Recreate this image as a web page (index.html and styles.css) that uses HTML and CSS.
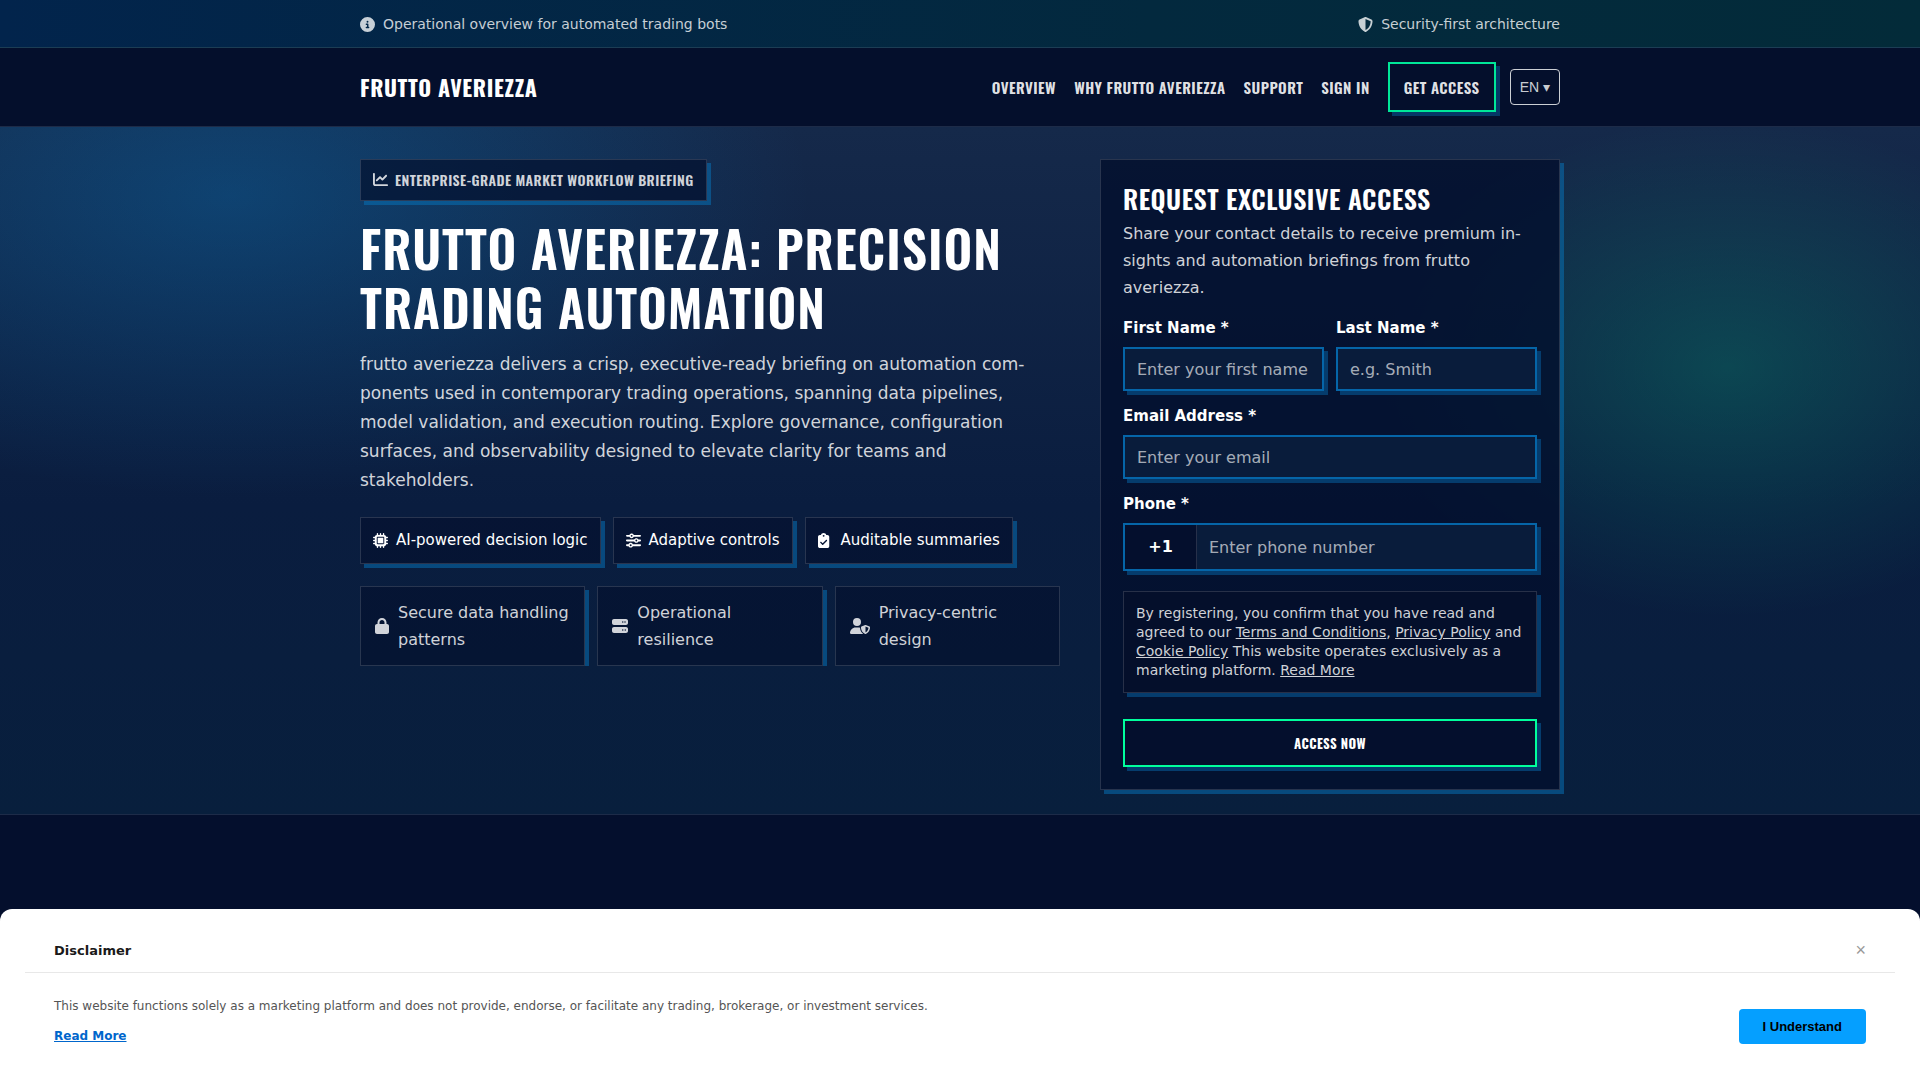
FILE: index.html
```html
<!DOCTYPE html>
<html lang="en">
<head>
  <meta charset="UTF-8" />
  <meta name="viewport" content="width=device-width, initial-scale=1.0" />
  <title>Frutto Averiezza</title>
  <link rel="stylesheet" href="styles.css">
</head>
<body>
  <div class="topbar">
    <div class="container topbar-inner">
      <span class="topbar-item">
        <svg class="icon" viewBox="0 0 512 512" aria-hidden="true"><path d="M256 512A256 256 0 1 0 256 0a256 256 0 1 0 0 512zM216 336h24V272H216c-13.300 0-24-10.700-24-24s10.700-24 24-24h48c13.300 0 24 10.700 24 24v88h8c13.300 0 24 10.700 24 24s-10.700 24-24 24H216c-13.300 0-24-10.700-24-24s10.700-24 24-24zm40-208a32 32 0 1 1 0 64 32 32 0 1 1 0-64z"/></svg>
        Operational overview for automated trading bots
      </span>
      <span class="topbar-item">
        <svg class="icon" viewBox="0 0 512 512" aria-hidden="true"><path d="M256 0c4.600 0 9.200 1 13.400 2.900L457.700 82.800c22 9.300 38.400 31 38.300 57.200c-.5 99.200-41.300 280.700-213.600 363.200c-16.700 8-36.100 8-52.800 0C57.300 420.700 16.500 239.200 16 140c-.1-26.200 16.300-47.900 38.300-57.200L242.700 2.900C246.800 1 251.400 0 256 0zm0 66.800V444.800C394 378 431.100 230.100 432 141.400L256 66.800z"/></svg>
        Security-first architecture
      </span>
    </div>
  </div>

  <header class="header">
    <div class="container header-inner">
      <a href="#" class="logo">Frutto Averiezza</a>
      <nav class="nav">
        <a href="#overview">Overview</a>
        <a href="#why">Why frutto averiezza</a>
        <a href="#support">Support</a>
        <a href="#signin">Sign in</a>
        <a href="#access" class="nav-cta">Get access</a>
        <button type="button" class="lang">EN ▾</button>
      </nav>
    </div>
  </header>

  <section class="hero">
    <div class="container hero-grid">
      <div class="hero-copy">
        <span class="kicker">
          <svg class="icon" viewBox="0 0 512 512" aria-hidden="true"><path d="M64 64c0-17.700-14.300-32-32-32S0 46.300 0 64V400c0 44.200 35.800 80 80 80H480c17.700 0 32-14.300 32-32s-14.300-32-32-32H80c-8.800 0-16-7.200-16-16V64zm406.600 86.600c12.500-12.500 12.500-32.800 0-45.300s-32.800-12.500-45.300 0L320 210.700l-57.400-57.400c-12.500-12.500-32.800-12.500-45.300 0l-112 112c-12.500 12.500-12.500 32.800 0 45.300s32.800 12.500 45.300 0L240 221.300l57.400 57.400c12.500 12.500 32.800 12.500 45.300 0l128-128z"/></svg>
          Enterprise-grade market workflow briefing
        </span>
        <h1>Frutto averiezza: precision trading automation</h1>
        <p class="lead">frutto averiezza delivers a crisp, executive-ready briefing on automation com&shy;ponents used in contemporary trading operations, spanning data pipelines, model validation, and execution routing. Explore governance, configuration surfaces, and observability designed to elevate clarity for teams and stakeholders.</p>

        <ul class="chips">
          <li class="chip">
            <svg class="icon" viewBox="0 0 512 512" aria-hidden="true"><path d="M176 24c0-13.300-10.700-24-24-24s-24 10.700-24 24v40c-35.300 0-64 28.700-64 64H24c-13.300 0-24 10.700-24 24s10.700 24 24 24h40v56H24c-13.300 0-24 10.700-24 24s10.700 24 24 24h40v56H24c-13.300 0-24 10.700-24 24s10.700 24 24 24h40c0 35.300 28.700 64 64 64v40c0 13.300 10.700 24 24 24s24-10.700 24-24v-40h56v40c0 13.300 10.700 24 24 24s24-10.700 24-24v-40h56v40c0 13.300 10.700 24 24 24s24-10.700 24-24v-40c35.300 0 64-28.700 64-64h40c13.300 0 24-10.700 24-24s-10.700-24-24-24h-40v-56h40c13.300 0 24-10.700 24-24s-10.700-24-24-24h-40v-56h40c13.300 0 24-10.700 24-24s-10.700-24-24-24h-40c0-35.300-28.700-64-64-64V24c0-13.300-10.700-24-24-24s-24 10.700-24 24v40h-56V24c0-13.300-10.700-24-24-24s-24 10.700-24 24v40h-56V24zM160 128h192c17.700 0 32 14.300 32 32v192c0 17.700-14.300 32-32 32H160c-17.700 0-32-14.300-32-32V160c0-17.700 14.300-32 32-32zm192 32H160v192h192V160z"/></svg>
            AI-powered decision logic
          </li>
          <li class="chip">
            <svg class="icon" viewBox="0 0 512 512" aria-hidden="true"><path d="M0 416c0 17.700 14.300 32 32 32h54.700c12.300 28.300 40.500 48 73.300 48s61-19.700 73.300-48H480c17.700 0 32-14.300 32-32s-14.300-32-32-32H233.300c-12.300-28.300-40.500-48-73.300-48s-61 19.700-73.300 48H32c-17.700 0-32 14.300-32 32zm128 0a32 32 0 1 1 64 0 32 32 0 1 1-64 0zm192-160a32 32 0 1 1 64 0 32 32 0 1 1-64 0zm32-80c-32.800 0-61 19.700-73.300 48H32c-17.700 0-32 14.300-32 32s14.300 32 32 32h246.700c12.300 28.300 40.500 48 73.300 48s61-19.700 73.300-48H480c17.700 0 32-14.300 32-32s-14.300-32-32-32h-54.700c-12.300-28.300-40.500-48-73.300-48zM192 128a32 32 0 1 1 0-64 32 32 0 1 1 0 64zm73.300-64C253 35.700 224.800 16 192 16s-61 19.700-73.300 48H32C14.300 64 0 78.300 0 96s14.300 32 32 32h86.700c12.300 28.300 40.500 48 73.300 48s61-19.700 73.300-48H480c17.700 0 32-14.300 32-32s-14.300-32-32-32H265.300z"/></svg>
            Adaptive controls
          </li>
          <li class="chip">
            <svg class="icon" viewBox="64 0 512 512" aria-hidden="true"><path d="M256 0c-41.800 0-77.400 26.700-90.500 64H128c-35.300 0-64 28.700-64 64v320c0 35.300 28.700 64 64 64h256c35.300 0 64-28.700 64-64V128c0-35.300-28.700-64-64-64h-37.500C333.400 26.700 297.800 0 256 0zm0 64a32 32 0 1 1 0 64 32 32 0 1 1 0-64zm113 209L241 401c-9.400 9.400-24.600 9.400-33.900 0l-64-64c-9.400-9.400-9.400-24.600 0-33.900s24.600-9.400 33.900 0l47 47 111-111c9.400-9.400 24.600-9.400 33.900 0s9.400 24.600 0 33.900z"/></svg>
            Auditable summaries
          </li>
        </ul>

        <ul class="trust">
          <li class="trust-item">
            <svg class="icon" viewBox="0 0 448 512" aria-hidden="true"><path d="M144 144v48h160v-48c0-44.200-35.800-80-80-80s-80 35.800-80 80zM80 192v-48C80 64.500 144.500 0 224 0s144 64.500 144 144v48h16c35.300 0 64 28.700 64 64v192c0 35.300-28.700 64-64 64H64c-35.300 0-64-28.700-64-64V256c0-35.300 28.700-64 64-64h16z"/></svg>
            Secure data handling patterns
          </li>
          <li class="trust-item">
            <svg class="icon" viewBox="0 0 512 512" aria-hidden="true"><path d="M64 32C28.700 32 0 60.700 0 96v64c0 35.300 28.700 64 64 64h384c35.300 0 64-28.700 64-64V96c0-35.300-28.700-64-64-64H64zm280 72a24 24 0 1 1 0 48 24 24 0 1 1 0-48zm48 24a24 24 0 1 1 48 0 24 24 0 1 1-48 0zM64 288c-35.300 0-64 28.700-64 64v64c0 35.300 28.700 64 64 64h384c35.300 0 64-28.700 64-64v-64c0-35.300-28.700-64-64-64H64zm280 72a24 24 0 1 1 0 48 24 24 0 1 1 0-48zm56 24a24 24 0 1 1 48 0 24 24 0 1 1-48 0z"/></svg>
            Operational resilience
          </li>
          <li class="trust-item">
            <svg class="icon" viewBox="0 0 640 512" aria-hidden="true"><path d="M224 256A128 128 0 1 0 224 0a128 128 0 1 0 0 256zm-45.700 48C79.800 304 0 383.800 0 482.300 0 498.700 13.300 512 29.700 512h388.600c1.800 0 3.500-.2 5.300-.5-76.300-55.100-99.800-141-103.100-200.200-16.100-4.800-33.100-7.300-50.700-7.300h-91.500zm308.800-78.300l-120 48C358 277.400 352 286.200 352 296c0 63.300 25.900 168.800 134.800 214.200 5.900 2.500 12.600 2.500 18.500 0C614.100 464.800 640 359.300 640 296c0-9.800-6-18.600-15.100-22.300l-120-48c-5.700-2.300-12.100-2.300-17.800 0zM591.400 312c-3.900 50.700-27.200 116.700-95.400 149.700V273.800l95.400 38.200z"/></svg>
            Privacy-centric design
          </li>
        </ul>
      </div>

      <form class="card" id="access">
        <h2>Request exclusive access</h2>
        <p class="card-text">Share your contact details to receive premium in&shy;sights and automation briefings from frutto averiezza.</p>
        <div class="row">
          <div class="field">
            <label for="first-name">First Name *</label>
            <input type="text" id="first-name" placeholder="Enter your first name" />
          </div>
          <div class="field">
            <label for="last-name">Last Name *</label>
            <input type="text" id="last-name" placeholder="e.g. Smith" />
          </div>
        </div>
        <div class="field">
          <label for="email">Email Address *</label>
          <input type="email" id="email" placeholder="Enter your email" />
        </div>
        <div class="field">
          <label for="phone">Phone *</label>
          <div class="phone">
            <span class="prefix">+1</span>
            <input type="tel" id="phone" placeholder="Enter phone number" />
          </div>
        </div>
        <p class="consent">By registering, you confirm that you have read and agreed to our <a href="#terms">Terms and Conditions</a>, <a href="#privacy">Privacy Policy</a> and <a href="#cookies">Cookie Policy</a> This website operates exclusively as a marketing platform. <a href="#more">Read More</a></p>
        <button type="submit" class="submit">Access now</button>
      </form>
    </div>
  </section>

  <div class="disclaimer" id="disclaimer">
    <div class="disclaimer-head">
      <strong>Disclaimer</strong>
      <button type="button" class="close" aria-label="Close">×</button>
    </div>
    <div class="disclaimer-body">
      <div>
        <p>This website functions solely as a marketing platform and does not provide, endorse, or facilitate any trading, brokerage, or investment services.</p>
        <a href="#more">Read More</a>
      </div>
      <button type="button" class="understand">I Understand</button>
    </div>
  </div>
</body>
</html>
```
FILE: styles.css
```css
:root {
  --heading: Oswald, "Liberation Sans Narrow", "DejaVu Sans Condensed", sans-serif;
  --text: #fff;
  --muted: rgba(255, 255, 255, 0.82);
  --line: rgba(255, 255, 255, 0.14);
  --blue: #0565a8;
  --green: #00ff9d;
  --shadow: 4px 4px 0 rgba(5, 117, 190, 0.5);
}
* {
  box-sizing: border-box;
}
body {
  margin: 0;
  min-height: 100vh;
  font-family: "DejaVu Sans", sans-serif;
  font-size: 16px;
  line-height: 27px;
  color: var(--text);
  background-color: #040f2d;
}
h1, h2, p, ul {
  margin: 0;
  padding: 0;
}
ul {
  list-style: none;
}
.container {
  max-width: 1200px;
  margin: 0 auto;
}
.icon {
  width: 15px;
  height: 15px;
  flex: none;
  fill: currentColor;
}

/* Top bar */
.topbar {
  padding: 12px 0 11px;
  background: linear-gradient(90deg, #02244c, #03293e 60%, #032b39);
  border-bottom: 1px solid #1c3d54;
  font-size: 14px;
  line-height: 24px;
  color: rgba(255, 255, 255, 0.78);
}
.topbar-inner, .header-inner {
  display: flex;
  align-items: center;
  justify-content: space-between;
}
.topbar-item {
  display: flex;
  align-items: center;
  gap: 8px;
}

/* Header */
.header {
  padding: 14px 0;
  background: #040f2c;
  border-bottom: 1px solid #1d2b48;
}
.logo {
  font-family: var(--heading);
  font-size: 22px;
  font-weight: 700;
  letter-spacing: 0.03em;
  line-height: 26px;
  text-transform: uppercase;
  text-decoration: none;
  color: var(--text);
}
.nav {
  display: flex;
  align-items: center;
  gap: 18px;
}
.nav a {
  font-family: var(--heading);
  font-size: 15px;
  font-weight: 600;
  letter-spacing: 0.03em;
  line-height: 26px;
  text-transform: uppercase;
  text-decoration: none;
  color: rgba(255, 255, 255, 0.9);
}
.nav .nav-cta {
  padding: 10px 14px;
  border: 2px solid #00e698;
  box-shadow: 4px 4px 0 #053766;
}
.lang {
  margin-left: -4px;
  height: 36px;
  padding: 0 9px;
  border: 1px solid rgba(255, 255, 255, 0.8);
  border-radius: 4px;
  background: transparent;
  color: rgba(255, 255, 255, 0.8);
  font-family: "Liberation Sans", "DejaVu Sans", sans-serif;
  font-size: 14px;
}

/* Hero */
.hero {
  padding: 32px 0 24px;
  border-bottom: 1px solid #1d2b48;
  background:
    radial-gradient(ellipse 580px 300px at 12% 10%, rgba(5, 125, 200, 0.32), transparent),
    radial-gradient(ellipse 360px 250px at 90% 35%, rgba(0, 255, 157, 0.17), transparent),
    linear-gradient(180deg, #15294a, #0a1d3f 55%, #081f3d);
}
.hero-grid {
  display: grid;
  grid-template-columns: 700fr 460fr;
  gap: 40px;
  align-items: start;
}
.kicker {
  display: inline-flex;
  align-items: center;
  gap: 7px;
  padding: 7px 12px 8px;
  border: 1px solid var(--line);
  background: rgba(3, 15, 45, 0.7);
  box-shadow: var(--shadow);
  font-family: var(--heading);
  font-size: 14px;
  font-weight: 600;
  letter-spacing: 0.03em;
  line-height: 25px;
  text-transform: uppercase;
  color: var(--muted);
}
h1 {
  margin-top: 17px;
  font-family: var(--heading);
  font-size: 50px;
  font-weight: 600;
  letter-spacing: 0.02em;
  line-height: 59px;
  text-transform: uppercase;
}
.lead {
  margin-top: 14px;
  max-width: 680px;
  font-size: 17px;
  line-height: 29px;
  color: var(--muted);
}
.chips {
  display: flex;
  flex-wrap: wrap;
  gap: 12px;
  margin-top: 22px;
}
.chip {
  display: flex;
  align-items: center;
  gap: 8px;
  padding: 10px 12px;
  border: 1px solid var(--line);
  background: rgba(3, 15, 45, 0.6);
  box-shadow: var(--shadow);
  font-size: 15px;
  line-height: 25px;
}
.trust {
  display: grid;
  grid-template-columns: repeat(3, 1fr);
  gap: 12px;
  margin-top: 22px;
  overflow: hidden;
}
.trust-item {
  display: flex;
  align-items: center;
  gap: 9px;
  padding: 12px 14px;
  border: 1px solid var(--line);
  background: rgba(3, 15, 45, 0.6);
  box-shadow: var(--shadow);
  color: var(--muted);
}
.trust-item .icon {
  width: auto;
  height: 16px;
}

/* Access form */
.card {
  display: grid;
  gap: 12px;
  padding: 22px;
  border: 1px solid var(--line);
  background: rgba(3, 15, 45, 0.8);
  box-shadow: var(--shadow);
}
h2 {
  font-family: var(--heading);
  font-size: 26px;
  font-weight: 600;
  letter-spacing: 0.02em;
  line-height: 34px;
  text-transform: uppercase;
}
.card-text {
  margin: -8px 0 2px;
  color: var(--muted);
}
.row {
  display: grid;
  grid-template-columns: 1fr 1fr;
  gap: 12px;
}
.field {
  display: grid;
  gap: 6px;
}
.field label {
  font-size: 15px;
  font-weight: 700;
  line-height: 26px;
}
.field input {
  width: 100%;
  min-width: 0;
  height: 44px;
  padding: 0 12px;
  border: 2px solid var(--blue);
  border-radius: 0;
  background: #091c3b;
  box-shadow: 4px 4px 0 #053c6d;
  color: var(--text);
  font-family: inherit;
  font-size: 16px;
}
.field input::placeholder {
  color: rgba(255, 255, 255, 0.65);
}
.phone {
  display: flex;
  border: 2px solid var(--blue);
  box-shadow: 4px 4px 0 #053c6d;
}
.prefix {
  flex: none;
  width: 72px;
  padding: 8px 0;
  border-right: 1px solid var(--line);
  background: #040f2d;
  font-weight: 700;
  text-align: center;
}
.field .phone input {
  border: 0;
  box-shadow: none;
}
.consent {
  margin-top: 8px;
  padding: 12px;
  border: 1px solid var(--line);
  background: #040f2b;
  box-shadow: 4px 4px 0 #053c6d;
  font-size: 14px;
  line-height: 19px;
  color: var(--muted);
}
.consent a {
  color: inherit;
}
.submit {
  height: 48px;
  margin-top: 14px;
  border: 2px solid var(--green);
  background: #040f2d;
  box-shadow: 4px 4px 0 #053c6d;
  color: var(--text);
  font-family: var(--heading);
  font-size: 13px;
  font-weight: 700;
  letter-spacing: 0.03em;
  text-transform: uppercase;
}

/* Disclaimer sheet */
.disclaimer {
  position: fixed;
  left: 0;
  right: 0;
  bottom: 0;
  padding: 24px 25px 34px;
  border-radius: 12px 12px 0 0;
  background: #fff;
  color: #555;
  font-size: 12px;
}
.disclaimer-head {
  display: flex;
  align-items: center;
  justify-content: space-between;
  padding: 4px 29px 8px;
  border-bottom: 1px solid #e8e8e8;
  font-size: 13px;
  color: #1a1a1a;
}
.close {
  padding: 0;
  border: 0;
  background: none;
  color: #999;
  font-family: "Liberation Sans", sans-serif;
  font-size: 18px;
}
.disclaimer-body {
  display: flex;
  align-items: center;
  justify-content: space-between;
  padding: 23px 29px 0;
  line-height: 20px;
}
.disclaimer-body p {
  margin-bottom: 10px;
}
.disclaimer-body a {
  color: #0066cc;
  font-weight: 700;
}
.understand {
  align-self: flex-end;
  height: 35px;
  margin-bottom: 2px;
  padding: 0 24px;
  border: 0;
  border-radius: 4px;
  background: #059fff;
  color: #000;
  font-family: "Liberation Sans", sans-serif;
  font-size: 13px;
  font-weight: 700;
}
```
